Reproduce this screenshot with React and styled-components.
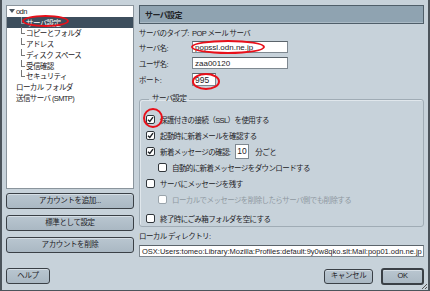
import styled, { createGlobalStyle } from 'styled-components';

const GlobalStyle = createGlobalStyle`
  html, body { margin: 0; padding: 0; }
  body {
    font-family: "Liberation Sans", "Noto Sans CJK JP", sans-serif;
    font-size: 7.5px;
    letter-spacing: -0.6px;
    color: #1e2226;
  }
`;

const Window = styled.div`
  position: relative;
  width: 430px;
  height: 291px;
  box-sizing: border-box;
  background: #c7d2da;
  border-left: 2px solid #4c545b;
  border-right: 2px solid #4c545b;
  border-bottom: 1px solid #4c545b;
  padding: 5px 4px 0 4px;
  display: flex;
  flex-direction: column;
  overflow: hidden;
`;

const Main = styled.div`
  display: flex;
  gap: 5px;
  height: 261px;
`;

const LeftCol = styled.div`
  width: 128px;
  display: flex;
  flex-direction: column;
`;

const Tree = styled.div`
  height: 184px;
  background: #fff;
  border: 1px solid #8a949c;
  box-sizing: border-box;
`;

const TreeRow = styled.div`
  height: 10.75px;
  display: flex;
  align-items: center;
  white-space: nowrap;
  padding-left: ${p => p.$indent}px;
  background: ${p => (p.$selected ? '#3d4e5d' : 'transparent')};
  color: ${p => (p.$selected ? '#fff' : '#1e2226')};
`;

const Branch = styled.span`
  display: inline-block;
  width: 3px;
  height: 6px;
  margin-right: 1px;
  border-left: 1px solid ${p => (p.$light ? '#8d9aa5' : '#777')};
  border-bottom: 1px solid ${p => (p.$light ? '#8d9aa5' : '#777')};
  transform: translateY(-2px);
`;

const ButtonStack = styled.div`
  display: flex;
  flex-direction: column;
  gap: 6px;
  margin-top: 4px;
`;

const Button = styled.button`
  font-family: inherit;
  font-size: 7.5px;
  letter-spacing: -0.4px;
  color: #1e2226;
  background: linear-gradient(#b9c6d0, #aab8c3);
  border: ${p => (p.$default ? '2px' : '1px')} solid #3a4046;
  border-radius: 3px;
  height: ${p => p.$h || 16}px;
  width: ${p => (p.$w ? `${p.$w}px` : '100%')};
  padding: 0;
  line-height: 1;
  box-shadow: inset 0 1px 0 #d5dee5;
`;

const RightCol = styled.div`
  flex: 1;
  display: flex;
  flex-direction: column;
`;

const Header = styled.div`
  height: 19px;
  box-sizing: border-box;
  background: #8fa3b1;
  border: 1px solid #4f5e69;
  box-shadow: inset 0 -1px 0 #a9b9c4;
  font-weight: bold;
  font-size: 8px;
  padding-left: 5px;
  display: flex;
  align-items: center;
`;

const FormRow = styled.div`
  display: flex;
  align-items: center;
  height: ${p => p.$h || 16}px;
`;

const Label = styled.span`
  width: 53px;
  white-space: nowrap;
`;

const TextField = styled.div`
  width: ${p => p.$w}px;
  height: ${p => p.$h || 12}px;
  box-sizing: border-box;
  background: #fff;
  border: 1px solid #7e8890;
  border-top-color: #5b646b;
  padding-left: 2px;
  display: flex;
  align-items: center;
  font-size: ${p => p.$size || 8}px;
  letter-spacing: 0;
  white-space: nowrap;
  overflow: hidden;
`;

const Group = styled.fieldset`
  margin: 6px 0 0 0;
  padding: 2px 0 0 6px;
  border: 1px solid #a0acb5;
  border-radius: 3px;
  height: 133px;
  box-sizing: border-box;
  box-shadow: inset 1px 1px 0 #e0e7ec;
  min-width: 0;
`;

const Legend = styled.legend`
  padding: 0 3px;
  margin-left: 3px;
  height: 10px;
  line-height: 10px;
`;

const CheckRow = styled.div`
  display: flex;
  align-items: center;
  height: 16px;
  margin-top: ${p => p.$gap || 0}px;
  padding-left: ${p => p.$indent || 0}px;
  color: ${p => (p.$disabled ? '#8f99a1' : '#1e2226')};
  white-space: nowrap;
`;

const Box = styled.span`
  width: 9px;
  height: 9px;
  box-sizing: border-box;
  border: 1px solid ${p => (p.$disabled ? '#9aa4ab' : '#30363b')};
  border-radius: 2px;
  background: #fff;
  margin-right: 5px;
  display: inline-flex;
  align-items: center;
  justify-content: center;
  flex: none;
`;

const SmallField = styled.div`
  width: 14px;
  height: 15px;
  box-sizing: border-box;
  background: #fff;
  border: 1px solid #7e8890;
  font-size: 8.5px;
  letter-spacing: 0;
  display: flex;
  align-items: center;
  padding-left: 1px;
  margin: 0 6px 0 5px;
`;

const DirLabel = styled.div`
  margin-top: 2px;
  height: 12px;
  display: flex;
  align-items: center;
`;

const Footer = styled.div`
  display: flex;
  align-items: center;
  height: 20px;
`;

const Spacer = styled.div`
  flex: 1;
`;

const Mark = styled.span`
  position: absolute;
  left: ${p => p.$x}px;
  top: ${p => p.$y}px;
  width: ${p => p.$w}px;
  height: ${p => p.$h}px;
  border: 2px solid #e8101a;
  border-radius: 50%;
  box-sizing: border-box;
  pointer-events: none;
`;

const Grip = styled.svg`
  position: absolute;
  right: 0;
  bottom: 0;
`;

const Check = () => (
  <svg width="7" height="7" viewBox="0 0 7 7">
    <path d="M1 3.8 L2.8 5.5 L6 1.2" fill="none" stroke="#1e2226" strokeWidth="1.4" />
  </svg>
);

const CheckItem = ({ checked, disabled, indent, gap, children }) => (
  <CheckRow $indent={indent} $disabled={disabled} $gap={gap}>
    <Box $disabled={disabled}>{checked && <Check />}</Box>
    {children}
  </CheckRow>
);

const treeItems = ['コピーとフォルダ', 'アドレス', 'ディスク スペース', '受信確認', 'セキュリティ'];

export default function App() {
  return (
    <>
      <GlobalStyle />
      <Window>
        <Main>
          <LeftCol>
            <Tree>
              <TreeRow $indent={2}>
                <svg width="6" height="5" viewBox="0 0 6 5" style={{ marginRight: 1 }}>
                  <path d="M0 0 H6 L3 4 Z" fill="#4a5560" />
                </svg>
                odn
              </TreeRow>
              <TreeRow $indent={14} $selected>
                <Branch $light />サーバ設定
              </TreeRow>
              {treeItems.map(label => (
                <TreeRow key={label} $indent={14}>
                  <Branch />
                  {label}
                </TreeRow>
              ))}
              <TreeRow $indent={9}>ローカル フォルダ</TreeRow>
              <TreeRow $indent={9}>送信サーバ (SMTP)</TreeRow>
            </Tree>
            <ButtonStack>
              <Button>アカウントを追加...</Button>
              <Button>標準として設定</Button>
              <Button>アカウントを削除</Button>
            </ButtonStack>
          </LeftCol>
          <RightCol>
            <Header>サーバ設定</Header>
            <FormRow $h={14} style={{ marginTop: 1 }}>
              <Label>サーバのタイプ:</Label>
              <span>POP メール サーバ</span>
            </FormRow>
            <FormRow>
              <Label>サーバ名:</Label>
              <TextField $w={96}>popssl.odn.ne.jp</TextField>
            </FormRow>
            <FormRow>
              <Label>ユーザ名:</Label>
              <TextField $w={96}>zaa00120</TextField>
            </FormRow>
            <FormRow $h={17}>
              <Label>ポート:</Label>
              <TextField $w={24} $h={13} $size={8.5}>995</TextField>
            </FormRow>
            <Group>
              <Legend>サーバ設定</Legend>
              <CheckItem checked gap={5}>保護付きの接続（SSL）を使用する</CheckItem>
              <CheckItem checked>起動時に新着メールを確認する</CheckItem>
              <CheckRow>
                <Box>
                  <Check />
                </Box>
                新着メッセージの確認:
                <SmallField>10</SmallField>
                分ごと
              </CheckRow>
              <CheckItem indent={12}>自動的に新着メッセージをダウンロードする</CheckItem>
              <CheckItem>サーバにメッセージを残す</CheckItem>
              <CheckItem indent={12} disabled>
                ローカルでメッセージを削除したらサーバ側でも削除する
              </CheckItem>
              <CheckItem gap={3}>終了時にごみ箱フォルダを空にする</CheckItem>
            </Group>
            <DirLabel>ローカル ディレクトリ:</DirLabel>
            <TextField $w={285} $h={12} $size={7.5} style={{ marginTop: 4 }}>
              OSX:Users:tomeo:Library:Mozilla:Profiles:default:9y0w8qko.slt:Mail:pop01.odn.ne.jp
            </TextField>
          </RightCol>
        </Main>
        <Footer>
          <Button $w={44} $h={16}>ヘルプ</Button>
          <Spacer />
          <Button $w={49} $h={15} style={{ marginRight: 8 }}>キャンセル</Button>
          <Button $w={43} $h={17} $default>OK</Button>
        </Footer>
        <Mark $x={20} $y={15} $w={47} $h={12} />
        <Mark $x={189} $y={40} $w={74} $h={14} />
        <Mark $x={190} $y={73} $w={28} $h={17} />
        <Mark $x={141} $y={108} $w={20} $h={20} />
        <Grip width="8" height="8" viewBox="0 0 8 8">
          <path d="M7 2 L2 7 M7 5 L5 7" stroke="#555" strokeWidth="1" />
        </Grip>
      </Window>
    </>
  );
}
